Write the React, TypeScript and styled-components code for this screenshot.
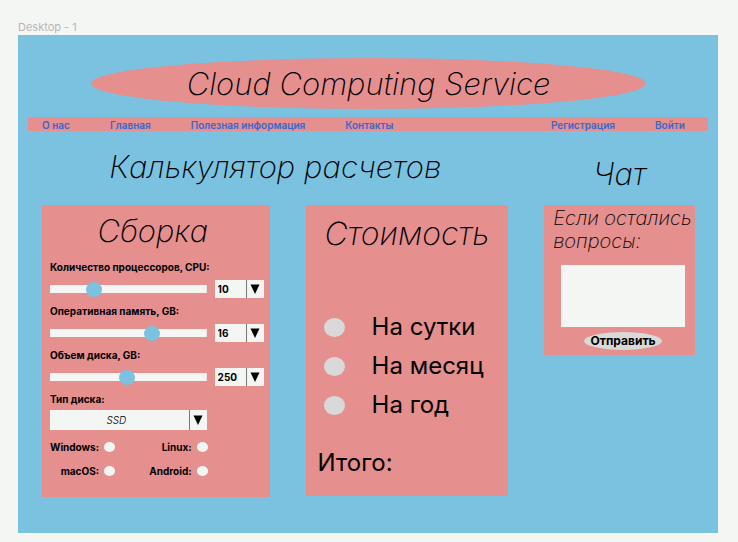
import React, { useState } from "react";
import styled, { createGlobalStyle } from "styled-components";

const sky = "#7ac2e0";
const rose = "#e58f8f";
const paper = "#f4f6f4";
const grey = "#d9d9d9";

const GlobalStyle = createGlobalStyle`
  * { box-sizing: border-box; }
  body {
    margin: 0;
    background: ${paper};
    color: #000;
    font-family: Inter, "Liberation Sans", sans-serif;
    font-size: 10px;
    line-height: 12px;
  }
  button, input, select, textarea { font: inherit; color: inherit; }
`;

const Canvas = styled.div`
  padding: 20px 20px 9px 18px;
`;

const FrameName = styled.div`
  height: 15px;
  font-size: 11px;
  line-height: 15px;
  color: #b9b4b9;
`;

const Frame = styled.div`
  background: ${sky};
  padding: 23px 10px 36px;
`;

const Banner = styled.header`
  display: flex;
  align-items: center;
  justify-content: center;
  height: 51px;
  margin: 0 62px 8px 63px;
  border-radius: 50%;
  background: ${rose};
`;

const Title = styled.h1`
  margin: 0;
  font-size: 31px;
  line-height: 40px;
  font-weight: 200;
  font-style: italic;
  white-space: nowrap;
`;

const Nav = styled.nav`
  display: flex;
  justify-content: space-between;
  height: 14px;
  padding: 0 23px 0 14px;
  background: ${rose};
`;

const NavGroup = styled.div`
  display: flex;
  gap: 40px;
`;

const NavLink = styled.a`
  font-weight: 600;
  line-height: 16px;
  color: #3a66cc;
  text-decoration: none;
  white-space: nowrap;
`;

const Main = styled.main`
  display: grid;
  grid-template-columns: minmax(0, 228fr) minmax(0, 203fr) minmax(0, 151fr);
  column-gap: 36px;
  align-items: start;
  padding: 0 13px 0 14px;
`;

const Heading = styled.h2<{ $span?: number; $top: number }>`
  grid-column: span ${(p) => p.$span ?? 1};
  margin: 0;
  padding-top: ${(p) => p.$top}px;
  height: 74px;
  font-size: 31px;
  line-height: 40px;
  font-weight: 200;
  font-style: italic;
  text-align: center;
  white-space: nowrap;
`;

const Card = styled.section<{ $pad: string }>`
  padding: ${(p) => p.$pad};
  background: ${rose};
`;

const CardTitle = styled.h3<{ $gap: number; $size: number }>`
  margin: 0 0 ${(p) => p.$gap}px;
  font-size: ${(p) => p.$size}px;
  line-height: 40px;
  font-weight: 200;
  font-style: italic;
  text-align: center;
  white-space: nowrap;
`;

const BuildTitle = styled(CardTitle)`
  padding-right: 8px;
`;

const Label = styled.label`
  display: block;
  font-weight: 700;
  white-space: nowrap;
`;

const Field = styled.div`
  margin-bottom: 7px;
`;

const ControlRow = styled.div`
  display: grid;
  grid-template-columns: 1fr 49px;
  column-gap: 8px;
  align-items: center;
`;

const SliderRow = styled(ControlRow)`
  margin-top: 7px;
`;

const Slider = styled.input`
  appearance: none;
  width: 100%;
  height: 16px;
  margin: 0;
  background: linear-gradient(${paper}, ${paper}) center / 100% 8px no-repeat;

  &::-webkit-slider-thumb {
    appearance: none;
    width: 16px;
    height: 15px;
    border-radius: 50%;
    background: ${sky};
  }
`;

const Picker = styled.div`
  display: grid;
  grid-template-columns: 1fr 18px;
  background: ${paper};
`;

const NumberSelect = styled.select`
  grid-area: 1 / 1 / 2 / 3;
  appearance: none;
  width: 100%;
  height: 18px;
  padding: 0 18px 0 3px;
  border: 0;
  border-radius: 0;
  background: transparent;
  font-weight: 700;
`;

const TypeSelect = styled(NumberSelect)`
  height: 20px;
  padding: 0 24px 0 0;
  font-weight: 300;
  font-style: italic;
  text-align: center;
  text-align-last: center;
`;

const TypePicker = styled(Picker)`
  margin-top: 5px;
`;

const ArrowCell = styled.span`
  grid-area: 1 / 2;
  display: flex;
  align-items: center;
  justify-content: center;
  border-left: 1px solid #777;
  pointer-events: none;
`;

const Systems = styled.div`
  display: grid;
  grid-template-columns: 1fr 1fr;
  column-gap: 32px;
  row-gap: 12px;
  margin: 11px 56px 0 0;
`;

const SystemRow = styled.div`
  display: flex;
  align-items: center;
  justify-content: flex-end;
  gap: 5px;
`;

const Dot = styled.input<{ $w: number; $h: number; $color: string }>`
  appearance: none;
  flex: none;
  width: ${(p) => p.$w}px;
  height: ${(p) => p.$h}px;
  margin: 0;
  border-radius: 50%;
  background: ${(p) => p.$color};

  &:checked {
    background: ${sky};
  }
`;

const Periods = styled.div`
  display: grid;
  row-gap: 9px;
  padding-left: 6px;
`;

const Period = styled.div`
  display: flex;
  align-items: center;
  gap: 27px;
`;

const PeriodLabel = styled.label`
  font-size: 24px;
  line-height: 30px;
  font-weight: 400;
  white-space: nowrap;
`;

const Total = styled.p`
  margin: 28px 0 0;
  font-size: 24px;
  line-height: 30px;
`;

const ChatForm = styled.form`
  display: flex;
  flex-direction: column;
`;

const ChatLabel = styled.label`
  font-size: 20px;
  line-height: 23px;
  font-weight: 200;
  font-style: italic;
`;

const ChatBody = styled.div`
  display: flex;
  flex-direction: column;
  align-items: center;
  gap: 5px;
  padding: 12px 8px 0;
`;

const Message = styled.textarea`
  width: 100%;
  height: 62px;
  padding: 4px;
  border: 0;
  resize: none;
  background: ${paper};
`;

const Send = styled.button`
  width: 78px;
  height: 18px;
  padding: 0;
  border: 0;
  border-radius: 50%;
  background: ${grey};
  font-size: 12px;
  font-weight: 700;
  white-space: nowrap;
`;

const Arrow = () => (
  <svg width="10" height="10" viewBox="0 0 10 10" aria-hidden="true">
    <path d="M0.5 0.5H9.5L5 10Z" fill="#000" />
  </svg>
);

type ResourceProps = {
  id: string;
  label: string;
  initial: number;
  max: number;
  options: number[];
};

function Resource({ id, label, initial, max, options }: ResourceProps) {
  const [value, setValue] = useState(initial);
  const choices = Array.from(new Set([...options, value])).sort((a, b) => a - b);
  return (
    <Field>
      <Label htmlFor={id}>{label}</Label>
      <SliderRow>
        <Slider
          id={id}
          type="range"
          min={0}
          max={max}
          value={value}
          onChange={(e) => setValue(Number(e.target.value))}
        />
        <Picker>
          <NumberSelect
            aria-label={label}
            value={value}
            onChange={(e) => setValue(Number(e.target.value))}
          >
            {choices.map((n) => (
              <option key={n}>{n}</option>
            ))}
          </NumberSelect>
          <ArrowCell>
            <Arrow />
          </ArrowCell>
        </Picker>
      </SliderRow>
    </Field>
  );
}

const systems = ["Windows", "Linux", "macOS", "Android"];
const periods = ["На сутки", "На месяц", "На год"];

export default function App() {
  return (
    <>
      <GlobalStyle />
      <Canvas>
        <FrameName>Desktop - 1</FrameName>
        <Frame>
          <Banner>
            <Title>Cloud Computing Service</Title>
          </Banner>
          <Nav>
            <NavGroup>
              {["О нас", "Главная", "Полезная информация", "Контакты"].map((t) => (
                <NavLink key={t} href="#">{t}</NavLink>
              ))}
            </NavGroup>
            <NavGroup>
              {["Регистрация", "Войти"].map((t) => (
                <NavLink key={t} href="#">{t}</NavLink>
              ))}
            </NavGroup>
          </Nav>
          <Main>
            <Heading $span={2} $top={16}>Калькулятор расчетов</Heading>
            <Heading $top={23}>Чат</Heading>

            <Card $pad="6px 6px 20px 8px">
              <BuildTitle $size={31} $gap={10}>Сборка</BuildTitle>
              <Resource id="cpu" label="Количество процессоров, CPU:" initial={10} max={39} options={[2, 4, 10, 20]} />
              <Resource id="ram" label="Оперативная память, GB:" initial={16} max={24} options={[4, 8, 16, 24]} />
              <Resource id="disk" label="Объем диска, GB:" initial={250} max={512} options={[120, 250, 500]} />
              <ControlRow>
                <div>
                  <Label htmlFor="disk-type">Тип диска:</Label>
                  <TypePicker>
                    <TypeSelect id="disk-type" defaultValue="SSD">
                      <option>SSD</option>
                      <option>HDD</option>
                    </TypeSelect>
                    <ArrowCell>
                      <Arrow />
                    </ArrowCell>
                  </TypePicker>
                </div>
              </ControlRow>
              <Systems>
                {systems.map((s) => (
                  <SystemRow key={s}>
                    <Label htmlFor={s}>{s}:</Label>
                    <Dot id={s} type="radio" name="system" $w={11} $h={10} $color={paper} />
                  </SystemRow>
                ))}
              </Systems>
            </Card>

            <Card $pad="9px 12px 18px">
              <CardTitle $size={32} $gap={58}>Стоимость</CardTitle>
              <Periods>
                {periods.map((p) => (
                  <Period key={p}>
                    <Dot id={p} type="radio" name="period" $w={21} $h={19} $color={grey} />
                    <PeriodLabel htmlFor={p}>{p}</PeriodLabel>
                  </Period>
                ))}
              </Periods>
              <Total>Итого:</Total>
            </Card>

            <Card $pad="2px 2px 5px 9px">
              <ChatForm onSubmit={(e) => e.preventDefault()}>
                <ChatLabel htmlFor="message">Если остались вопросы:</ChatLabel>
                <ChatBody>
                  <Message id="message" />
                  <Send type="submit">Отправить</Send>
                </ChatBody>
              </ChatForm>
            </Card>
          </Main>
        </Frame>
      </Canvas>
    </>
  );
}
